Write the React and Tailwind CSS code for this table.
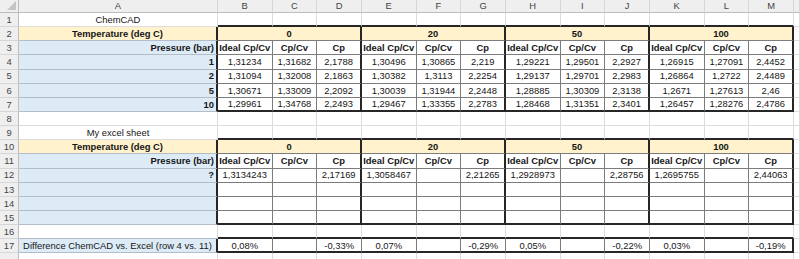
import React from 'react';

// Sheet with two Cp/Cv tables (ChemCAD results and a hand-built copy)

const LETTERS = ['A', 'B', 'C', 'D', 'E', 'F', 'G', 'H', 'I', 'J', 'K', 'L', 'M', ''];
const TEMPS = ['0', '20', '50', '100'];
const SUBHEADS = ['Ideal Cp/Cv', 'Cp/Cv', 'Cp'];

const CHEMCAD = [
  ['1', ['1,31234', '1,31682', '2,1788', '1,30496', '1,30865', '2,219', '1,29221', '1,29501', '2,2927', '1,26915', '1,27091', '2,4452']],
  ['2', ['1,31094', '1,32008', '2,1863', '1,30382', '1,3113', '2,2254', '1,29137', '1,29701', '2,2983', '1,26864', '1,2722', '2,4489']],
  ['5', ['1,30671', '1,33009', '2,2092', '1,30039', '1,31944', '2,2448', '1,28885', '1,30309', '2,3138', '1,2671', '1,27613', '2,46']],
  ['10', ['1,29961', '1,34768', '2,2493', '1,29467', '1,33355', '2,2783', '1,28468', '1,31351', '2,3401', '1,26457', '1,28276', '2,4786']],
];

const EXCEL = [
  ['?', ['1,3134243', '', '2,17169', '1,3058467', '', '2,21265', '1,2928973', '', '2,28756', '1,2695755', '', '2,44063']],
  ['', Array(12).fill('')],
  ['', Array(12).fill('')],
  ['', Array(12).fill('')],
];

const DIFF = ['0,08%', '', '-0,33%', '0,07%', '', '-0,29%', '0,05%', '', '-0,22%', '0,03%', '', '-0,19%'];

const RIGHT = {
  g: 'border-r border-r-[#dcdcdc]',
  t: 'border-r border-r-[#7c7c7c]',
  m: 'border-r-2 border-r-[#262626]',
  l: 'border-r border-r-[#b4bdc7]',
};

const BOTTOM = {
  g: 'border-b border-b-[#dcdcdc]',
  t: 'border-b border-b-[#7c7c7c]',
  m: 'border-b-2 border-b-[#262626]',
  l: 'border-b border-b-[#b4bdc7]',
};

const ALIGN = {
  left: 'justify-start pl-[2px]',
  center: 'justify-center',
  right: 'justify-end pr-[2px]',
};

const ORANGE = 'bg-[#fff2cc]';
const BLUE = 'bg-[#ddebf7]';

function Cell({ children, r = 'g', b = 'g', bg = 'bg-white', align = 'center', bold = false, wide = false }) {
  return (
    <div
      className={`flex items-center overflow-visible whitespace-nowrap text-[#161616] ${RIGHT[r]} ${BOTTOM[b]} ${bg} ${ALIGN[align]} ${bold ? 'font-bold' : ''} ${wide ? 'col-span-3' : ''}`}
    >
      {children}
    </div>
  );
}

function RowNum({ n }) {
  return (
    <div className="flex items-center justify-center bg-[#efefef] border-r border-r-[#bdbdbd] border-b border-b-[#d6d6d6] text-[#444]">
      {n}
    </div>
  );
}

const edge = (i) => (i % 3 === 2 ? 'm' : 't');

// blank row, optionally with a thick line underneath B..M (top edge of a table)
function PlainRow({ n, label, lineBelow = false, aBottom = 'g' }) {
  return (
    <>
      <RowNum n={n} />
      <Cell b={aBottom}>{label}</Cell>
      {Array.from({ length: 12 }, (_, i) => (
        <Cell key={i} b={lineBelow ? 'm' : 'g'} />
      ))}
      <Cell />
    </>
  );
}

function TempRow({ n }) {
  return (
    <>
      <RowNum n={n} />
      <Cell bg={ORANGE} bold r="m" b="l">Temperature (deg C)</Cell>
      {TEMPS.map((t) => (
        <Cell key={t} wide bg={ORANGE} bold r="m" b="t">{t}</Cell>
      ))}
      <Cell />
    </>
  );
}

function PressureRow({ n }) {
  return (
    <>
      <RowNum n={n} />
      <Cell bg={BLUE} bold align="right" r="m" b="l">Pressure (bar)</Cell>
      {Array.from({ length: 12 }, (_, i) => (
        <Cell key={i} bold r={edge(i)} b="t">{SUBHEADS[i % 3]}</Cell>
      ))}
      <Cell />
    </>
  );
}

function DataRow({ n, label, values, last }) {
  return (
    <>
      <RowNum n={n} />
      <Cell bg={BLUE} bold align="right" r="m" b="l">{label}</Cell>
      {values.map((v, i) => (
        <Cell key={i} r={edge(i)} b={last ? 'm' : 't'}>{v}</Cell>
      ))}
      <Cell />
    </>
  );
}

export default function App() {
  return (
    <div className="w-[800px] h-[259px] overflow-hidden bg-white font-['Liberation_Sans',Arial,sans-serif] text-[9.4px] leading-none">
      <div className="grid grid-cols-[19px_199px_repeat(4,54.5px_44.75px_44.75px)_1fr] grid-rows-[13px_repeat(18,14.15px)]">
        {/* column letters */}
        <div className="relative bg-[#efefef] border-r border-r-[#bdbdbd] border-b border-b-[#bdbdbd]">
          <svg className="absolute right-[2px] bottom-[2px]" width="9" height="9" viewBox="0 0 9 9">
            <polygon points="9,0 9,9 0,9" fill="#c4c4c4" />
          </svg>
        </div>
        {LETTERS.map((l, i) => (
          <div
            key={i}
            className="flex items-center justify-center bg-[#efefef] border-r border-r-[#d6d6d6] border-b border-b-[#bdbdbd] text-[#444]"
          >
            {l}
          </div>
        ))}

        <PlainRow n={1} label="ChemCAD" lineBelow />
        <TempRow n={2} />
        <PressureRow n={3} />
        {CHEMCAD.map(([label, values], i) => (
          <DataRow key={label} n={4 + i} label={label} values={values} last={i === CHEMCAD.length - 1} />
        ))}

        <PlainRow n={8} />
        <PlainRow n={9} label="My excel sheet" lineBelow />
        <TempRow n={10} />
        <PressureRow n={11} />
        {EXCEL.map(([label, values], i) => (
          <DataRow key={i} n={12 + i} label={label} values={values} last={i === EXCEL.length - 1} />
        ))}

        <PlainRow n={16} lineBelow aBottom="l" />

        {/* difference row */}
        <RowNum n={17} />
        <Cell bg={BLUE} r="m" b="l">Difference ChemCAD vs. Excel (row 4 vs. 11)</Cell>
        {DIFF.map((v, i) => (
          <Cell key={i} r={i === 11 ? 'm' : 't'} b="m">{v}</Cell>
        ))}
        <Cell />

        {/* next row, only its top sliver is on screen */}
        <PlainRow n="" />
      </div>
    </div>
  );
}
